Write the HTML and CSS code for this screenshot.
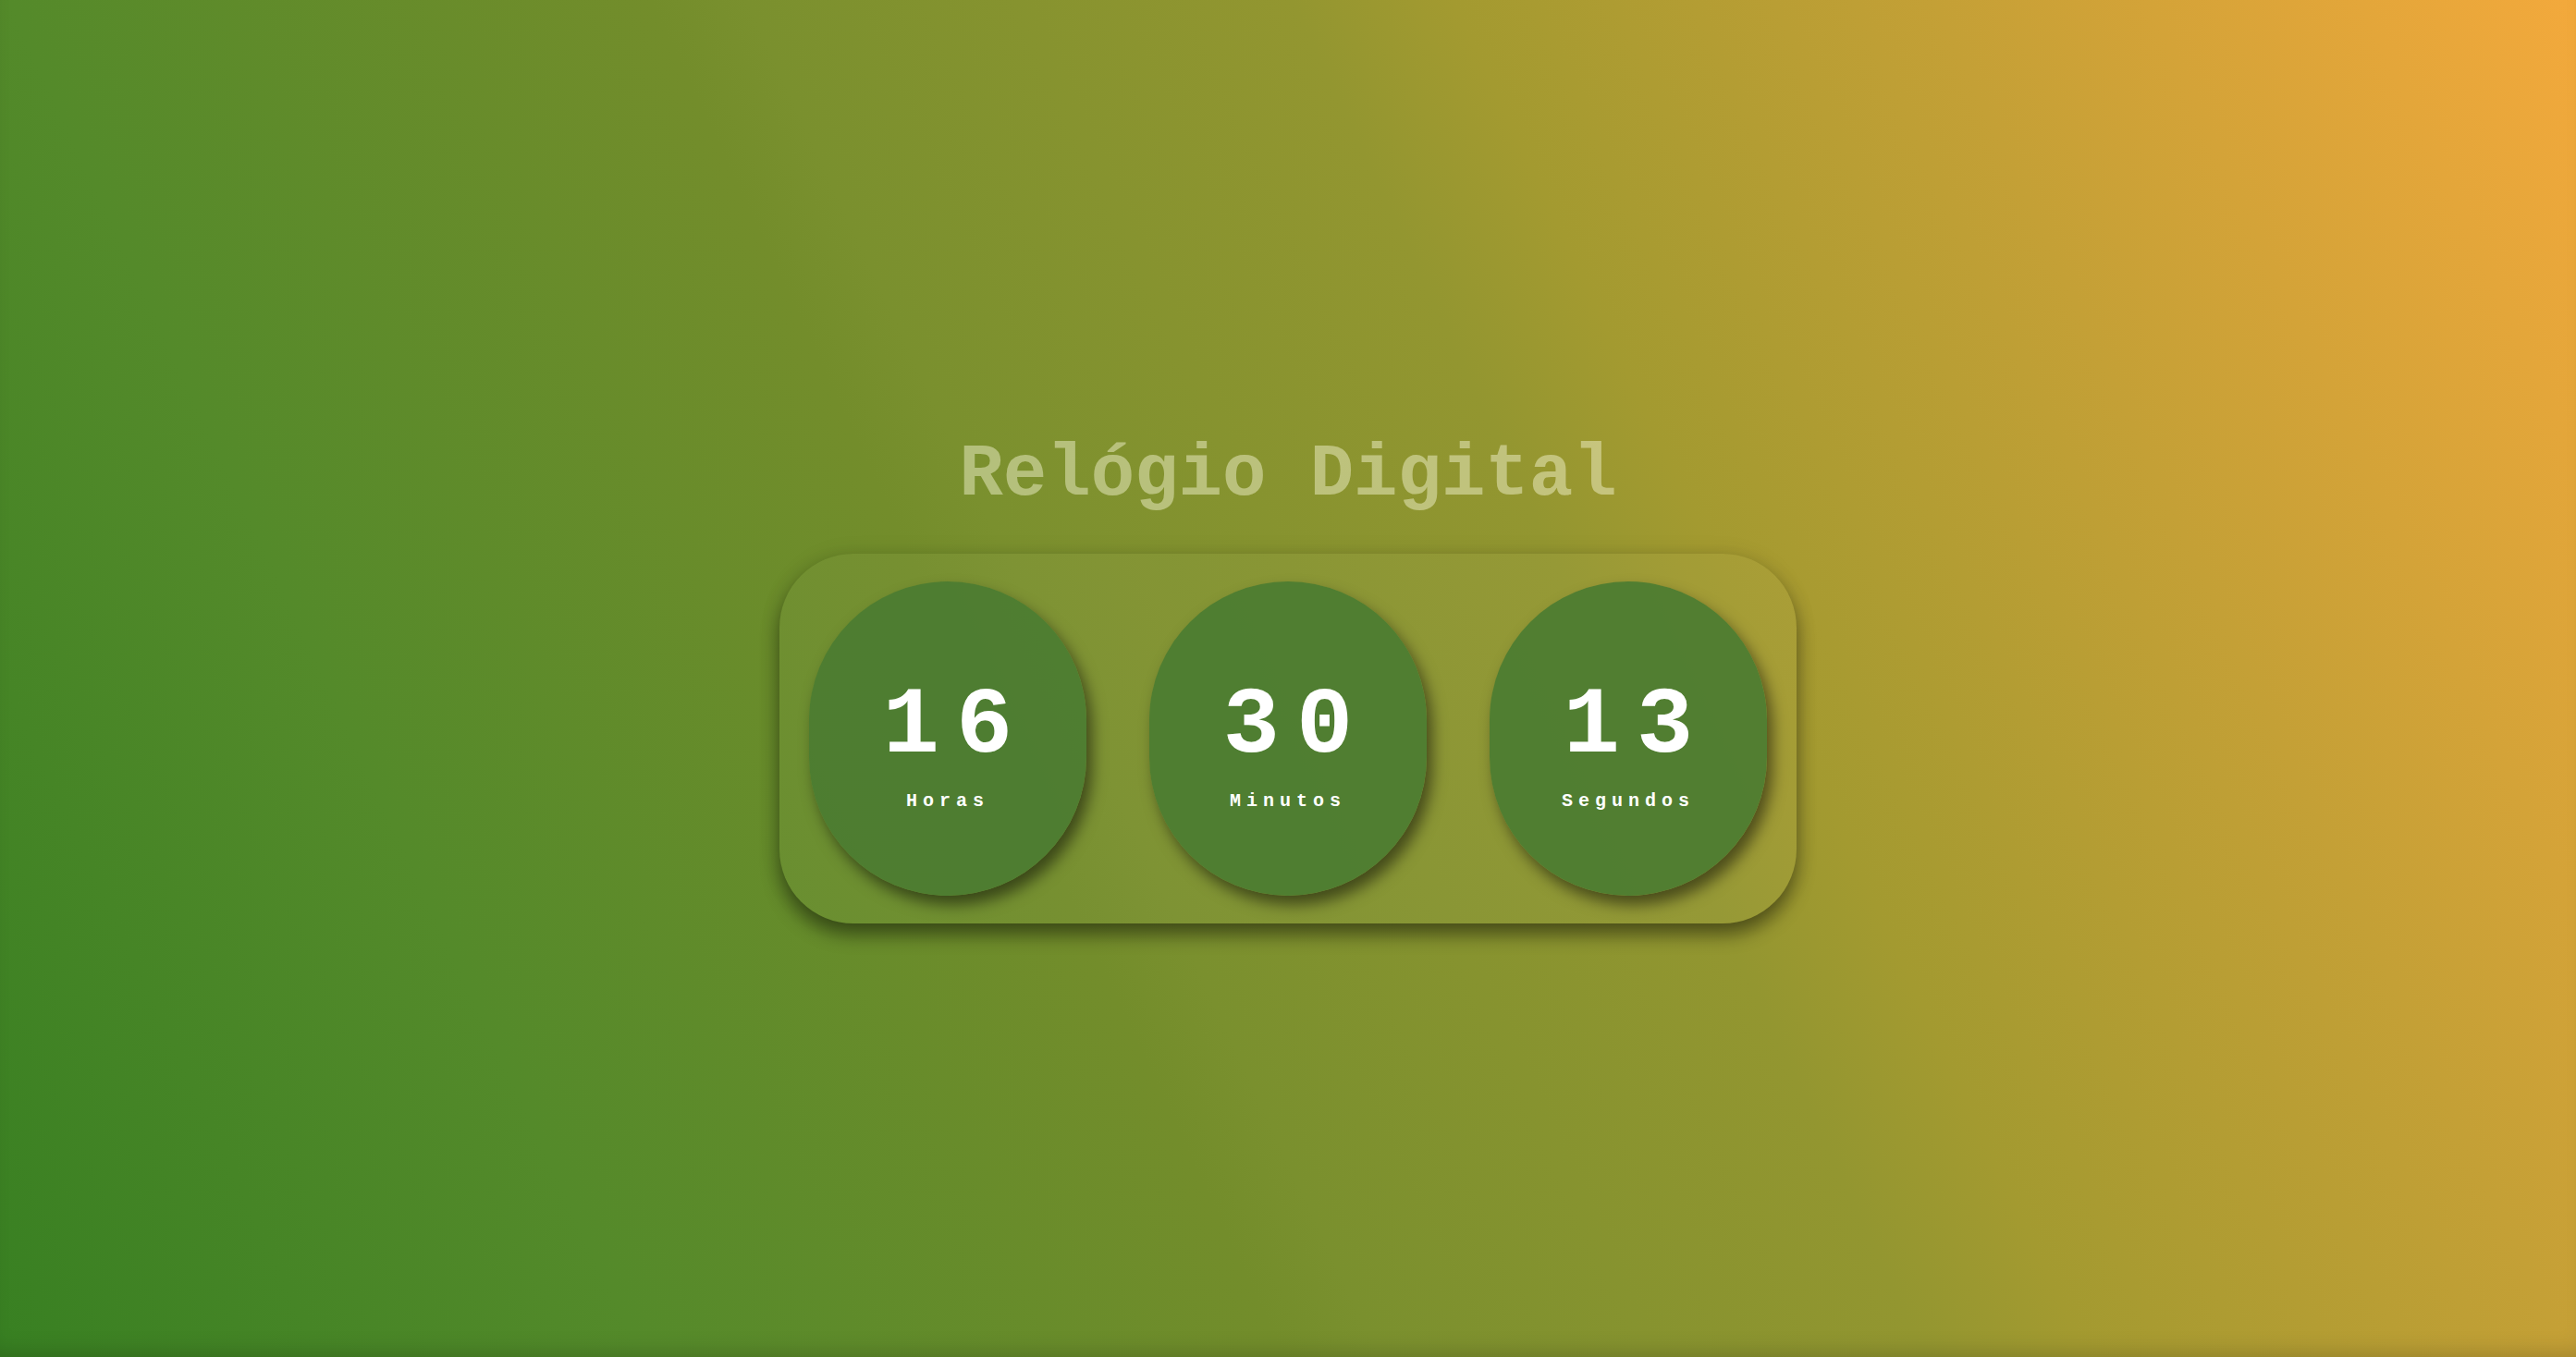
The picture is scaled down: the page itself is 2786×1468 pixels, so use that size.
FILE: index.html
```html
<!DOCTYPE html>
<html lang="pt-BR">
<head>
<meta charset="UTF-8">
<title>Relógio Digital</title>
<link rel="stylesheet" href="styles.css">
</head>
<body>
<main class="page">
  <h1 class="title">Relógio Digital</h1>
  <div class="clock">
    <div class="unit">
      <span class="num">16</span>
      <span class="label">Horas</span>
    </div>
    <div class="unit">
      <span class="num">30</span>
      <span class="label">Minutos</span>
    </div>
    <div class="unit">
      <span class="num">13</span>
      <span class="label">Segundos</span>
    </div>
  </div>
</main>
</body>
</html>
```
FILE: styles.css
```css
html, body {
  margin: 0;
  padding: 0;
  height: 100%;
}
body {
  font-family: "Liberation Mono", "Courier New", monospace;
  background: linear-gradient(65deg, #388022 0%, #548a2a 20%, #738d2b 40%, #7a902e 43%, #939630 60%, #a39a30 65%, #c4a036 80%, #f3a93c 100%);
  overflow: hidden;
}
.page {
  height: 100vh;
  display: flex;
  flex-direction: column;
  align-items: center;
  justify-content: center;
  box-shadow: inset 0 -18px 24px -14px rgba(0, 0, 0, 0.18);
  box-sizing: border-box;
}
.title {
  margin: 0 0 40px;
  font-size: 79px;
  font-weight: bold;
  line-height: 1.15;
  color: rgba(250, 250, 220, 0.45);
}
.clock {
  display: flex;
  gap: 68px;
  padding: 30px 32px;
  border-radius: 80px;
  background: rgba(255, 255, 255, 0.03);
  box-shadow: 0 12px 20px rgba(0, 0, 0, 0.45), 0 0 24px rgba(0, 0, 0, 0.08);
}
.unit {
  box-sizing: border-box;
  width: 300px;
  height: 340px;
  padding-top: 13px;
  border-radius: 150px;
  background: rgba(75, 124, 49, 0.92);
  box-shadow: 6px 10px 16px rgba(0, 0, 0, 0.5);
  display: flex;
  flex-direction: column;
  align-items: center;
  justify-content: center;
  gap: 20px;
  color: #ffffff;
}
.num {
  font-size: 102px;
  font-weight: bold;
  line-height: 1;
  letter-spacing: 18px;
  padding-left: 18px;
}
.label {
  font-size: 20px;
  font-weight: bold;
  line-height: 1;
  letter-spacing: 6px;
}
```
